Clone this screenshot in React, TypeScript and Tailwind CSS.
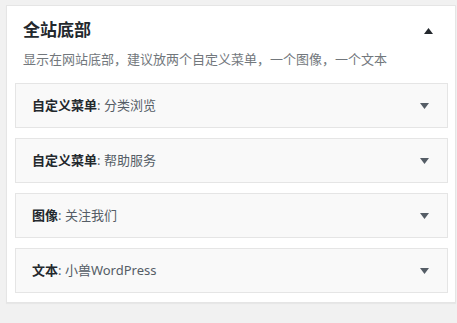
import React from 'react';

const items = [
  { type: '自定义菜单', title: '分类浏览' },
  { type: '自定义菜单', title: '帮助服务' },
  { type: '图像', title: '关注我们' },
  { type: '文本', title: '小兽WordPress' },
];

const Caret = ({ up = false }: { up?: boolean }) => (
  <svg width="9" height="6" viewBox="0 0 9 6" className={up ? 'text-[#23282d]' : 'text-[#555d66]'}>
    {up ? <path d="M0 6 L4.5 0 L9 6 Z" fill="currentColor" /> : <path d="M0 0 L9 0 L4.5 6 Z" fill="currentColor" />}
  </svg>
);

const App = () => {
  return (
    <div
      className="w-[457px] h-[323px] bg-[#f1f1f1] pt-[5px] pl-[6px]"
      style={{ fontFamily: '"Noto Sans", "Noto Sans CJK SC", sans-serif' }}
    >
      <div className="w-[450px] bg-white border border-[#e5e5e5] shadow-[0_1px_1px_rgba(0,0,0,0.04)]">
        <div className="flex items-start justify-between pl-[16px] pr-[22px] pt-[13px]">
          <div>
            <h3 className="text-[17px] leading-[22px] font-bold text-[#23282d]">全站底部</h3>
            <p className="mt-[8px] text-[13px] leading-[20px] text-[#72777c]">
              显示在网站底部，建议放两个自定义菜单，一个图像，一个文本
            </p>
          </div>
          <div className="pt-[9px]">
            <Caret up />
          </div>
        </div>
        <div className="flex flex-col gap-[10px] pl-[8px] pr-[7px] pt-[14px] pb-[9px]">
          {items.map((it, i) => (
            <div
              key={i}
              className="h-[45px] flex items-center justify-between bg-[#f9f9f9] border border-[#e5e5e5] pl-[16px] pr-[18px]"
            >
              <span className="text-[13px] text-[#555d66]">
                <strong className="font-bold text-[#23282d]">{it.type}</strong>: {it.title}
              </span>
              <Caret />
            </div>
          ))}
        </div>
      </div>
    </div>
  );
};

export default App;
